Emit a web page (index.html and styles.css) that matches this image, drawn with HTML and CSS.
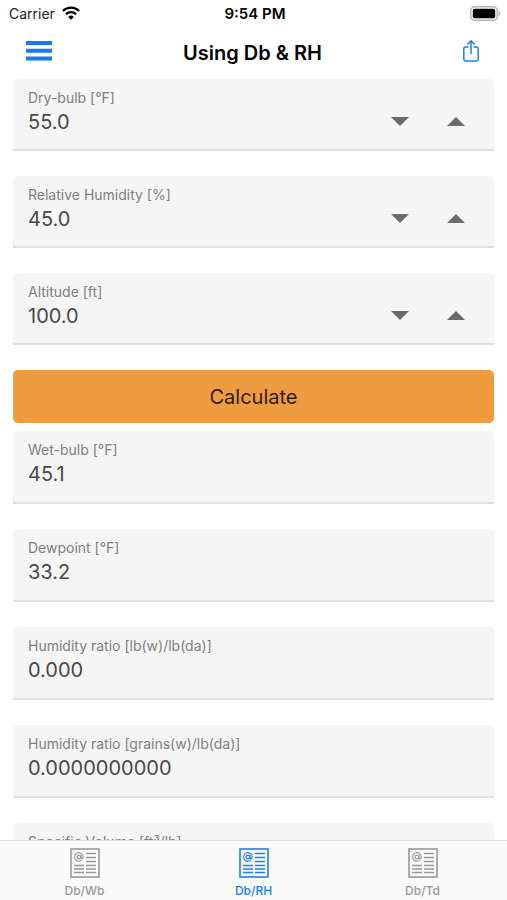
FILE: index.html
```html
<!DOCTYPE html>
<html lang="en">
<head>
<meta charset="utf-8">
<meta name="viewport" content="width=device-width, initial-scale=1">
<title>Using Db &amp; RH</title>
<link rel="stylesheet" href="styles.css">
</head>
<body>
<svg class="defs" aria-hidden="true">
  <symbol id="article" viewBox="0 0 30 30">
    <rect x="1" y="1" width="28" height="28" fill="none" stroke="currentColor" stroke-width="1.6"/>
    <g fill="none" stroke="currentColor" stroke-width="1.3">
      <path d="M16 5.500h10M16 9.500h10M16 13.500h10M16 17.500h10M16 21h10M16 24.500h10M4 17.500h10M4 21h10M4 24.500h10"/>
      <circle cx="9" cy="9" r="1.900" stroke-width="1.200"/>
      <path d="M11 7v3q.2 1.300 1.300.8q1-.8.9-2.300a4.300 4.300 0 1 0-1.700 3.900" stroke-width="1.100"/>
    </g>
  </symbol>
</svg>
<div class="status">
  <div class="carrier">
    <span>Carrier</span>
    <svg width="18" height="14" viewBox="0 0 18 14" fill="none" stroke="#000" stroke-width="2.300" aria-hidden="true">
      <path d="M.9 5a11.600 11.600 0 0 1 16.200 0"/>
      <path d="M3.900 8.200a7.300 7.300 0 0 1 10.200 0"/>
      <path d="M9 13.800L6.200 10.900a4 4 0 0 1 5.600 0z" fill="#000" stroke="none"/>
    </svg>
  </div>
  <time>9:54 PM</time>
  <svg class="battery" width="31" height="15" viewBox="0 0 31 15" aria-hidden="true">
    <rect x=".8" y=".8" width="26.400" height="13.400" rx="3.800" fill="#fff" stroke="#b4b4b4" stroke-width="1.500"/>
    <rect x="2.800" y="2.800" width="22.400" height="9.400" rx="1.800"/>
    <path d="M28.500 5q2 .8 2 2.500t-2 2.500z" fill="#b4b4b4"/>
  </svg>
</div>
<header class="nav">
  <button class="icon-button" type="button" aria-label="Menu">
    <svg width="26" height="20" viewBox="0 0 26 20" fill="#147af5"><path d="M0 0h26v4H0zM0 7.700h26v4H0zM0 15.400h26v4H0z"/></svg>
  </button>
  <h1>Using Db &amp; RH</h1>
  <button class="icon-button share" type="button" aria-label="Share">
    <svg width="16" height="22" viewBox="0 0 16 22" fill="none" stroke="#1b81f5" stroke-width="1.500" stroke-linecap="round" stroke-linejoin="round"><path d="M5 7H2.500Q.8 7 .8 8.700v10.600Q.8 21 2.500 21h11q1.700 0 1.700-1.700V8.700Q15.200 7 13.500 7H11M8 13.500V1M4.800 4L8 .9 11.200 4"/></svg>
  </button>
</header>
<main>
  <form class="inputs">
    <div class="field">
      <div class="entry"><label for="db">Dry-bulb [°F]</label><input id="db" type="text" inputmode="decimal" value="55.0"></div>
      <button class="step" type="button" aria-label="Decrease dry-bulb"><svg width="18" height="9" viewBox="0 0 18 9"><path d="M0 0h18L9 9z"/></svg></button>
      <button class="step" type="button" aria-label="Increase dry-bulb"><svg width="18" height="9" viewBox="0 0 18 9"><path d="M0 9h18L9 0z"/></svg></button>
    </div>
    <div class="field">
      <div class="entry"><label for="rh">Relative Humidity [%]</label><input id="rh" type="text" inputmode="decimal" value="45.0"></div>
      <button class="step" type="button" aria-label="Decrease relative humidity"><svg width="18" height="9" viewBox="0 0 18 9"><path d="M0 0h18L9 9z"/></svg></button>
      <button class="step" type="button" aria-label="Increase relative humidity"><svg width="18" height="9" viewBox="0 0 18 9"><path d="M0 9h18L9 0z"/></svg></button>
    </div>
    <div class="field">
      <div class="entry"><label for="alt">Altitude [ft]</label><input id="alt" type="text" inputmode="decimal" value="100.0"></div>
      <button class="step" type="button" aria-label="Decrease altitude"><svg width="18" height="9" viewBox="0 0 18 9"><path d="M0 0h18L9 9z"/></svg></button>
      <button class="step" type="button" aria-label="Increase altitude"><svg width="18" height="9" viewBox="0 0 18 9"><path d="M0 9h18L9 0z"/></svg></button>
    </div>
    <button class="calculate" type="button">Calculate</button>
  </form>
  <div class="results">
    <div class="field"><div class="entry"><label for="wb">Wet-bulb [°F]</label><input id="wb" type="text" readonly value="45.1"></div></div>
    <div class="field"><div class="entry"><label for="dp">Dewpoint [°F]</label><input id="dp" type="text" readonly value="33.2"></div></div>
    <div class="field"><div class="entry"><label for="hr">Humidity ratio [lb(w)/lb(da)]</label><input id="hr" type="text" readonly value="0.000"></div></div>
    <div class="field"><div class="entry"><label for="hg">Humidity ratio [grains(w)/lb(da)]</label><input id="hg" type="text" readonly value="0.0000000000"></div></div>
    <div class="field"><div class="entry"><label for="sv">Specific Volume [ft³/lb]</label><input id="sv" type="text" readonly></div></div>
  </div>
</main>
<nav class="tabs">
  <a href="#dbwb"><svg width="30" height="30" aria-hidden="true"><use href="#article"/></svg>Db/Wb</a>
  <a href="#dbrh" class="active" aria-current="page"><svg width="30" height="30" aria-hidden="true"><use href="#article"/></svg>Db/RH</a>
  <a href="#dbtd"><svg width="30" height="30" aria-hidden="true"><use href="#article"/></svg>Db/Td</a>
</nav>
</body>
</html>
```
FILE: styles.css
```css
* {
  box-sizing: border-box;
}

body {
  margin: 0;
  height: 100vh;
  display: flex;
  flex-direction: column;
  background: #fff;
  color: #000;
  font-family: Inter, "Liberation Sans", sans-serif;
}

button,
input {
  font: inherit;
  border: 0;
  padding: 0;
  margin: 0;
  background: none;
}

svg {
  display: block;
}

.defs {
  position: absolute;
  width: 0;
  height: 0;
}

.status {
  flex: none;
  display: grid;
  grid-template-columns: 1fr auto 1fr;
  align-items: center;
  height: 26px;
  padding: 0 6px 0 9px;
  font-size: 14px;
}

.carrier {
  display: flex;
  align-items: center;
  gap: 7px;
  color: #222;
}

.status time {
  font-size: 15px;
  font-weight: 600;
}

.battery {
  justify-self: end;
}

.nav {
  flex: none;
  display: grid;
  grid-template-columns: 1fr auto 1fr;
  align-items: center;
  height: 53px;
  padding: 0 28px 0 26px;
}

.nav h1 {
  margin: 0;
  font-size: 20px;
  font-weight: 600;
}

.icon-button {
  justify-self: start;
  padding-bottom: 4px;
}

.share {
  justify-self: end;
}

main {
  flex: 1;
  min-height: 0;
  overflow: hidden;
  padding: 0 13px;
}

.inputs,
.results {
  display: flex;
  flex-direction: column;
  gap: 25px;
}

.results {
  margin-top: 8px;
}

.field {
  display: flex;
  height: 72px;
  padding: 9px 10px 0 15px;
  border-bottom: 2px solid #e0e0e0;
  border-radius: 5px 5px 0 0;
  background: #f5f5f5;
}

.results .field {
  height: 73px;
}

.entry {
  flex: 1;
  min-width: 0;
  display: flex;
  flex-direction: column;
}

.entry label {
  color: #808080;
  font-size: 14px;
  line-height: 19px;
}

.entry input {
  width: 100%;
  height: 30px;
  color: #484848;
  font-size: 20px;
}

.step {
  width: 56px;
  height: 48px;
  margin-top: 9px;
  display: flex;
  align-items: center;
  justify-content: center;
  fill: #6b6b6b;
}

.calculate {
  height: 53px;
  border-radius: 5px;
  background: #ef9b40;
  color: #2f1a10;
  font-size: 20px;
}

.tabs {
  flex: none;
  display: grid;
  grid-template-columns: repeat(3, 1fr);
  height: 60px;
  border-top: 1px solid #dcdcdc;
  background: #fafafa;
}

.tabs a {
  display: flex;
  flex-direction: column;
  align-items: center;
  gap: 5px;
  padding-top: 7px;
  color: #999;
  font-size: 12px;
  font-weight: 500;
  line-height: 16px;
  text-decoration: none;
}

.tabs .active {
  color: #1a80f2;
}
```
